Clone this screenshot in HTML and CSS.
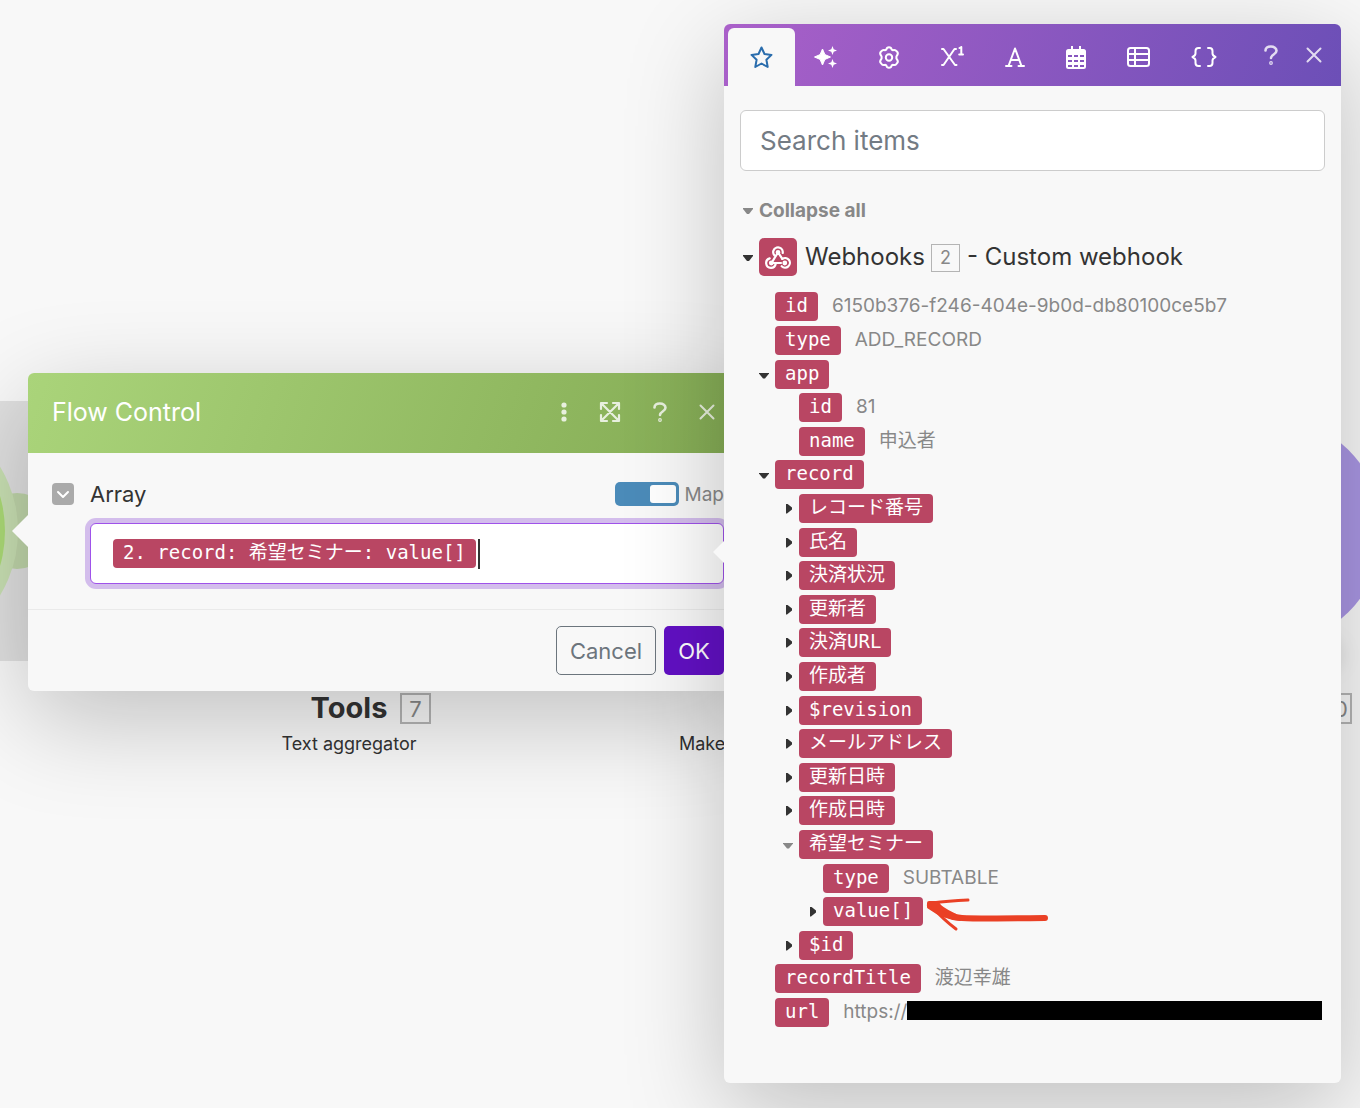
FILE: index.html
```html
<!DOCTYPE html>
<html lang="ja">
<head>
<meta charset="utf-8">
<title>Flow Control</title>
<link rel="stylesheet" href="styles.css">
</head>
<body>
<main class="canvas">
  <div class="band"></div>
  <svg class="node node-source" width="60" height="260" viewBox="0 0 60 260" aria-hidden="true">
    <circle cx="17" cy="130" r="38" fill="#c0d6aa"/>
    <circle cx="-107" cy="130" r="125" fill="#c9e0b3"/>
    <circle cx="-120" cy="130" r="125" fill="#acdb76"/>
  </svg>
  <svg class="node node-target" width="230" height="230" viewBox="0 0 230 230" aria-hidden="true">
    <circle cx="115" cy="115" r="115" fill="#a996e3"/>
  </svg>
  <div class="node-blur"></div>
  <div class="module module-tools">
    <h2 class="module-name">Tools<span class="module-no">7</span></h2>
    <p class="module-action">Text aggregator</p>
  </div>
  <p class="module module-make">Make</p>
  <span class="module module-no module-last">10</span>

  <section class="dialog" aria-label="Flow Control">
    <header class="dialog-head">
      <h1 class="dialog-title">Flow Control</h1>
      <div class="dialog-tools">
        <button class="icon-btn" aria-label="More"><svg width="6" height="20" viewBox="0 0 6 20" fill="currentColor"><circle cx="3" cy="3" r="2.600"/><circle cx="3" cy="10" r="2.600"/><circle cx="3" cy="17" r="2.600"/></svg></button>
        <button class="icon-btn" aria-label="Expand"><svg width="22" height="22" viewBox="0 0 22 22" fill="none" stroke="currentColor" stroke-width="2.200" stroke-linecap="round" stroke-linejoin="round"><path d="M2 8V2h6M14 2h6v6M20 14v6h-6M8 20H2v-6M2.500 2.500l17 17M19.500 2.500l-17 17"/></svg></button>
        <button class="icon-btn" aria-label="Help"><svg width="14" height="20" viewBox="0 0 14 20" fill="none" stroke="currentColor" stroke-width="2.600" stroke-linecap="round" stroke-linejoin="round"><path d="M1.500 5.500C1.500 3 3.500 1.500 6.800 1.500s5.700 1.700 5.700 4.300c0 3.700-5.500 3.700-5.500 7.200"/><circle cx="7" cy="18" r=".6"/></svg></button>
        <button class="icon-btn" aria-label="Close"><svg width="16" height="16" viewBox="0 0 16 16" fill="none" stroke="currentColor" stroke-width="2" stroke-linecap="round"><path d="M1.500 1.500l13 13M14.500 1.500l-13 13"/></svg></button>
      </div>
    </header>
    <div class="dialog-body">
      <div class="field-head">
        <button class="fold" aria-label="Collapse field"><svg width="14" height="10" viewBox="0 0 14 10" fill="none" stroke="#fff" stroke-width="2" stroke-linecap="round" stroke-linejoin="round"><path d="M2 3l5 5 5-5"/></svg></button>
        <span class="field-label" id="array-label">Array</span>
        <label class="map"><input class="map-switch" type="checkbox" checked>Map</label>
      </div>
      <div class="field-box" role="textbox" tabindex="0" aria-labelledby="array-label"><span class="chip">2. record: 希望セミナー: value[]</span><span class="text-caret"></span></div>
    </div>
    <footer class="dialog-foot">
      <button class="btn btn-cancel">Cancel</button>
      <button class="btn btn-ok">OK</button>
    </footer>
  </section>

  <aside class="panel" aria-label="Mapping panel">
    <header class="panel-head">
      <button class="tab-active" aria-label="Favorites"><svg width="23" height="23" viewBox="0 0 23 23" fill="none" stroke="currentColor" stroke-width="2" stroke-linejoin="round"><path d="M11.500 1.500l3 6.500 7 .9-5.100 4.900 1.300 7.200-6.200-3.500L5.300 21l1.300-7.200L1.500 8.900l7-.9z"/></svg></button>
      <nav class="tabs">
        <button class="icon-btn tab-icon" aria-label="AI"><svg width="23" height="22" viewBox="0 0 23 22" fill="currentColor"><path d="M8.500 3l2.400 5.600 5.600 2.400-5.600 2.400L8.500 19l-2.400-5.600L.5 11l5.600-2.400z" stroke="currentColor" stroke-linejoin="round"/><path d="M18.500 0l1.200 3.300L23 4.500l-3.300 1.200L18.500 9l-1.200-3.300L14 4.500l3.300-1.200zM18.500 13l1.200 3.300 3.300 1.200-3.300 1.200-1.200 3.300-1.200-3.300-3.300-1.200 3.300-1.200z"/></svg></button>
        <button class="icon-btn tab-icon" aria-label="General"><svg width="22" height="23" viewBox="0 0 22 23" fill="none" stroke="currentColor" stroke-width="2" stroke-linejoin="round"><path d="M8.300 3.600Q8.800 1.200 11 1.200t2.700 2.400l1 .6q2.600-.9 3.900 1.100 2 1.500.8 3.600l-1 1.600v2l1 1.600q1.200 2.100-.8 3.600-1.300 2-3.900 1.100l-1 .6q-.5 2.400-2.700 2.400t-2.700-2.400l-1-.6q-2.600.9-3.900-1.100-2-1.500-.8-3.600l1-1.600v-2l-1-1.600q-1.200-2.100.8-3.600 1.300-2 3.900-1.100z"/><circle cx="11" cy="11.500" r="3.200"/></svg></button>
        <button class="icon-btn tab-icon" aria-label="Math"><svg width="23" height="22" viewBox="0 0 23 22" fill="none" stroke="currentColor" stroke-width="2" stroke-linecap="round" stroke-linejoin="round"><path d="M1 3h1.500l11.500 16h1.500M15 3h-1.500L2.500 19H1M18.500 2l1.800-1v7M18.200 8.500H22"/></svg></button>
        <button class="icon-btn tab-icon" aria-label="Text"><svg width="20" height="20" viewBox="0 0 20 20" fill="none" stroke="currentColor" stroke-width="2" stroke-linecap="round" stroke-linejoin="round"><path d="M1 19h5.500M13.500 19H19M3.500 19L10 1.500 16.500 19M6 13h8"/></svg></button>
        <button class="icon-btn tab-icon" aria-label="Date"><svg width="20" height="23" viewBox="0 0 20 23" fill="currentColor" fill-rule="evenodd"><path d="M5 0h2v3h6V0h2v3h2.500Q20 3 20 5.500v15q0 2.500-2.500 2.500h-15Q0 23 0 20.500v-15Q0 3 2.500 3H5zM2 9v2h4v-2zm6 0v2h4v-2zm6 0v2h4v-2zm-12 5v2h4v-2zm6 0v2h4v-2zm6 0v2h4v-2zm-12 5v2h4v-2zm6 0v2h4v-2zm6 0v2h4v-2z"/></svg></button>
        <button class="icon-btn tab-icon" aria-label="Arrays"><svg width="23" height="20" viewBox="0 0 23 20" fill="none" stroke="currentColor" stroke-width="2"><rect x="1" y="1" width="21" height="18" rx="2.500"/><path d="M1 7h21M1 13h21M8 1v18"/></svg></button>
        <button class="icon-btn tab-icon" aria-label="Custom"><svg width="26" height="20" viewBox="0 0 26 20" fill="none" stroke="currentColor" stroke-width="2" stroke-linecap="round" stroke-linejoin="round"><path d="M9 1H7.500Q4.500 1 4.500 4v2.500Q4.500 8.500 1.500 10q3 1.500 3 3.500V16q0 3 3 3H9M17 1h1.500q3 0 3 3v2.500q0 2 3 3.500-3 1.500-3 3.500V16q0 3-3 3H17"/></svg></button>
      </nav>
      <div class="panel-tools">
        <button class="icon-btn" aria-label="Help"><svg width="14" height="20" viewBox="0 0 14 20" fill="none" stroke="currentColor" stroke-width="2.600" stroke-linecap="round" stroke-linejoin="round"><path d="M1.500 5.500C1.500 3 3.500 1.500 6.800 1.500s5.700 1.700 5.700 4.300c0 3.700-5.500 3.700-5.500 7.200"/><circle cx="7" cy="18" r=".6"/></svg></button>
        <button class="icon-btn" aria-label="Close"><svg width="16" height="16" viewBox="0 0 16 16" fill="none" stroke="currentColor" stroke-width="2" stroke-linecap="round"><path d="M1.500 1.500l13 13M14.500 1.500l-13 13"/></svg></button>
      </div>
    </header>
    <div class="panel-body">
      <input class="search" type="text" placeholder="Search items" aria-label="Search items">
      <button class="collapse"><span class="slot"><i class="down"></i></span>Collapse all</button>
      <div class="source">
        <button class="slot" aria-label="Toggle Webhooks"><i class="down"></i></button>
        <span class="source-icon"><svg width="26" height="23" viewBox="0 0 26 23" fill="none" stroke="#fff" stroke-width="2.200" stroke-linecap="round" stroke-linejoin="round"><path d="M9.500 9.400A4.800 4.800 0 1 1 17.700 7M4.700 12.400a4.800 4.800 0 1 0 6 5.400M17.300 12.900a4.800 4.800 0 1 1-.6 7.300"/><path d="M12.600 7L7 16.300M13.500 7l3.800 5.900M7 17h9"/><circle cx="13" cy="6.300" r="1.300" fill="#fff"/><circle cx="6.300" cy="17" r="1.300" fill="#fff"/><circle cx="19.800" cy="17" r="1.300" fill="#fff"/></svg></span>
        <span class="source-name">Webhooks</span><span class="source-no">2</span><span class="source-name">- Custom webhook</span>
      </div>
      <ul class="tree">
        <li class="row"><span class="slot"></span><span class="chip">id</span><span class="value">6150b376-f246-404e-9b0d-db80100ce5b7</span></li>
        <li class="row"><span class="slot"></span><span class="chip">type</span><span class="value">ADD_RECORD</span></li>
        <li class="row"><button class="slot" aria-label="Toggle"><i class="down"></i></button><span class="chip">app</span></li>
        <li class="row level-2"><span class="slot"></span><span class="chip">id</span><span class="value">81</span></li>
        <li class="row level-2"><span class="slot"></span><span class="chip">name</span><span class="value">申込者</span></li>
        <li class="row"><button class="slot" aria-label="Toggle"><i class="down"></i></button><span class="chip">record</span></li>
        <li class="row level-2"><button class="slot" aria-label="Toggle"><i class="right"></i></button><span class="chip">レコード番号</span></li>
        <li class="row level-2"><button class="slot" aria-label="Toggle"><i class="right"></i></button><span class="chip">氏名</span></li>
        <li class="row level-2"><button class="slot" aria-label="Toggle"><i class="right"></i></button><span class="chip">決済状況</span></li>
        <li class="row level-2"><button class="slot" aria-label="Toggle"><i class="right"></i></button><span class="chip">更新者</span></li>
        <li class="row level-2"><button class="slot" aria-label="Toggle"><i class="right"></i></button><span class="chip">決済URL</span></li>
        <li class="row level-2"><button class="slot" aria-label="Toggle"><i class="right"></i></button><span class="chip">作成者</span></li>
        <li class="row level-2"><button class="slot" aria-label="Toggle"><i class="right"></i></button><span class="chip">$revision</span></li>
        <li class="row level-2"><button class="slot" aria-label="Toggle"><i class="right"></i></button><span class="chip">メールアドレス</span></li>
        <li class="row level-2"><button class="slot" aria-label="Toggle"><i class="right"></i></button><span class="chip">更新日時</span></li>
        <li class="row level-2"><button class="slot" aria-label="Toggle"><i class="right"></i></button><span class="chip">作成日時</span></li>
        <li class="row level-2"><button class="slot slot-muted" aria-label="Toggle"><i class="down"></i></button><span class="chip">希望セミナー</span></li>
        <li class="row level-3"><span class="slot"></span><span class="chip">type</span><span class="value">SUBTABLE</span></li>
        <li class="row level-3"><button class="slot" aria-label="Toggle"><i class="right"></i></button><span class="chip">value[]</span>
          <svg class="pointer" width="126" height="36" viewBox="0 0 126 36" fill="none" stroke="#ea4025" stroke-linecap="round" stroke-linejoin="round" aria-hidden="true"><path stroke-width="3" d="M8 6Q24 4 44 3M8 10Q20 23 32 32"/><path stroke-width="6" d="M6 8Q22 20 38 21T121 21"/><path fill="#ea4025" stroke-width="4" d="M5 6L13 6Q16 12 30 18L36 22Q20 21 5 10z"/></svg></li>
        <li class="row level-2"><button class="slot" aria-label="Toggle"><i class="right"></i></button><span class="chip">$id</span></li>
        <li class="row"><span class="slot"></span><span class="chip">recordTitle</span><span class="value">渡辺幸雄</span></li>
        <li class="row"><span class="slot"></span><span class="chip">url</span><span class="value">https://</span><span class="redacted"></span></li>
      </ul>
    </div>
  </aside>
</main>
</body>
</html>
```
FILE: styles.css
```css
* { box-sizing: border-box; }

body {
  margin: 0;
  background: #f8f8f8;
  color: #333;
  font-family: Inter, "Noto Sans CJK JP", sans-serif;
}

h1, h2, p, ul { margin: 0; padding: 0; }

button {
  margin: 0;
  padding: 0;
  border: 0;
  background: none;
  color: inherit;
  font: inherit;
}

svg { display: block; }

.canvas {
  position: relative;
  min-height: 100vh;
  overflow: hidden;
}

/* Scenario modules on the canvas */
.band {
  position: absolute;
  left: 0;
  top: 401px;
  width: 240px;
  height: 260px;
  background: #e0e0e0;
}

.node { position: absolute; }
.node-source { left: 0; top: 401px; }
.node-target { left: 1152px; top: 416px; }

.node-blur {
  position: absolute;
  left: 1310px;
  top: 635px;
  width: 36px;
  height: 40px;
  border-radius: 50%;
  background: rgba(0, 0, 0, .06);
  filter: blur(8px);
}

.module { position: absolute; }

.module-tools {
  left: 249px;
  top: 690px;
  width: 200px;
  text-align: center;
}

.module-name {
  position: relative;
  font-size: 29px;
  line-height: 36px;
  font-weight: 700;
}

.module-no {
  display: flex;
  align-items: center;
  justify-content: center;
  width: 31px;
  height: 31px;
  border: 2px solid #b4b4b4;
  color: #888;
  font-size: 22px;
  font-weight: 400;
}

.module-name .module-no {
  position: absolute;
  left: 151px;
  top: 3px;
}

.module-action,
.module-make {
  font-size: 18px;
  line-height: 24px;
}

.module-action { margin-top: 6px; }
.module-make { left: 679px; top: 732px; }
.module-last { left: 1321px; top: 693px; }

/* Flow Control dialog */
.dialog {
  position: absolute;
  left: 28px;
  top: 373px;
  width: 720px;
  border-radius: 6px;
  background: #f8f8f8;
  box-shadow: 0 28px 100px rgba(0, 0, 0, .23);
}

.dialog::before {
  content: "";
  position: absolute;
  left: -16px;
  top: 142px;
  border: 16px solid transparent;
  border-left: 0;
  border-right-color: #f8f8f8;
}

.dialog-head {
  display: flex;
  align-items: center;
  justify-content: space-between;
  height: 80px;
  padding: 0 33px 2px 24px;
  border-radius: 6px 6px 0 0;
  background: linear-gradient(110deg, #aad47a, #84ab54);
  color: #fff;
}

.dialog-title {
  font-size: 25px;
  line-height: 32px;
  font-weight: 400;
}

.dialog-tools {
  display: flex;
  align-items: center;
  gap: 32px;
}

.icon-btn { opacity: .8; }

.dialog-body { padding: 24px 24px 25px; }

.field-head {
  display: flex;
  align-items: center;
  height: 34px;
}

.fold {
  display: flex;
  align-items: center;
  justify-content: center;
  width: 22px;
  height: 22px;
  border-radius: 4px;
  background: #aaa;
}

.field-label {
  flex: 1;
  margin-left: 16px;
  font-size: 22px;
}

.map {
  display: flex;
  align-items: center;
  gap: 6px;
  color: #888;
  font-size: 19px;
}

.map-switch {
  appearance: none;
  width: 64px;
  height: 24px;
  margin: 0;
  padding: 3px;
  border-radius: 5px;
  background: #4b8bb9;
}

.map-switch::before {
  content: "";
  display: block;
  width: 26px;
  height: 18px;
  margin-left: auto;
  border-radius: 3px;
  background: #fff;
}

.field-box {
  display: flex;
  align-items: center;
  height: 61px;
  margin: 12px 0 0 38px;
  padding: 0 22px;
  border: 1px solid #9f52ea;
  border-radius: 6px;
  background: #fff;
  box-shadow: 0 0 0 5px #d3bdec;
}

.text-caret {
  width: 2px;
  height: 30px;
  margin-left: 2px;
  background: #333;
}

.dialog-foot {
  display: flex;
  justify-content: flex-end;
  gap: 8px;
  padding: 16px 24px;
  border-top: 1px solid #eaeaea;
}

.btn {
  height: 49px;
  border-radius: 5px;
  font-size: 22px;
}

.btn-cancel {
  width: 100px;
  border: 1px solid #6c757d;
  color: #6c757d;
}

.btn-ok {
  width: 60px;
  background: #6210c4;
  color: #fff;
}

/* Mapping panel */
.panel {
  position: absolute;
  left: 724px;
  right: 19px;
  top: 24px;
  padding-bottom: 51px;
  border-radius: 6px;
  background: #f8f8f8;
  box-shadow: 0 28px 100px rgba(0, 0, 0, .23);
}

.panel::before {
  content: "";
  position: absolute;
  left: -11px;
  top: 517px;
  border: 11px solid transparent;
  border-left: 0;
  border-right-color: #f8f8f8;
}

.panel-head {
  display: flex;
  height: 62px;
  padding: 4px 19px 0 4px;
  border-radius: 6px 6px 0 0;
  background: linear-gradient(110deg, #aa60c9, #6c4fb7);
  color: #fff;
}

.tab-active {
  display: flex;
  align-items: center;
  justify-content: center;
  width: 67px;
  border-radius: 6px 6px 0 0;
  background: #f8f8f8;
  color: #2a6dad;
}

.tabs {
  display: flex;
  flex: 1;
  align-items: center;
  gap: 41px;
  padding-left: 19px;
}

.tab-icon { opacity: 1; }

.panel-tools {
  display: flex;
  align-items: center;
  gap: 28px;
  padding-bottom: 4px;
}

.panel-body { padding: 24px 16px 0; }

.search {
  display: block;
  width: 100%;
  height: 61px;
  padding: 0 19px;
  border: 1px solid #ccc;
  border-radius: 6px;
  background: #fff;
  color: #333;
  font: 26px Inter, sans-serif;
}

.search::placeholder { color: #737b84; }

.collapse {
  display: flex;
  align-items: center;
  height: 24px;
  margin: 27px 0 0 3px;
  color: #888;
  font-size: 19px;
  font-weight: 700;
}

.slot {
  display: flex;
  flex: none;
  align-items: center;
  width: 16px;
  height: 24px;
}

.slot-muted { color: #888; }

.down,
.right {
  background: currentColor;
}

.down {
  width: 10px;
  height: 6px;
  margin-top: 2px;
  clip-path: polygon(0 0, 100% 0, 100% 17%, 60% 100%, 40% 100%, 0 17%);
}

.right {
  width: 6px;
  height: 10px;
  margin-left: 3px;
  clip-path: polygon(0 0, 17% 0, 100% 40%, 100% 60%, 17% 100%, 0 100%);
}

.source {
  display: flex;
  align-items: center;
  height: 38px;
  margin: 16px 0 0 3px;
}

.source-icon {
  display: flex;
  align-items: center;
  justify-content: center;
  width: 38px;
  height: 38px;
  margin-right: 8px;
  border-radius: 5px;
  background: #b94663;
}

.source-name {
  padding-bottom: 2px;
  font-size: 24px;
}

.source-no {
  width: 29px;
  margin: 1px 7px 0 6px;
  border: 1px solid #b4b4b4;
  color: #888;
  font-size: 18px;
  line-height: 26px;
  text-align: center;
}

/* Rows alternate so that the pitch averages out between 33 and 34 */
.tree {
  display: grid;
  grid-auto-rows: 34px 34px 33px 34px 33px;
  margin: 16px 0 0 19px;
  list-style: none;
}

.row {
  position: relative;
  display: flex;
  align-items: flex-start;
}

.row .slot { height: 29px; }

.level-2 { padding-left: 24px; }
.level-3 { padding-left: 48px; }

.chip {
  flex: none;
  height: 29px;
  padding: 0 10px;
  border-radius: 4px;
  background: #b94663;
  color: #fff;
  font-family: "DejaVu Sans Mono", "Noto Sans CJK JP", monospace;
  font-size: 19px;
  line-height: 27px;
}

.value {
  margin-left: 14px;
  color: #888;
  font-size: 19px;
  line-height: 28px;
}

.redacted {
  flex: 1;
  height: 19px;
  margin: 3px 3px 0 0;
  background: #000;
}

.pointer {
  position: absolute;
  left: 165px;
  top: 0;
}
```
